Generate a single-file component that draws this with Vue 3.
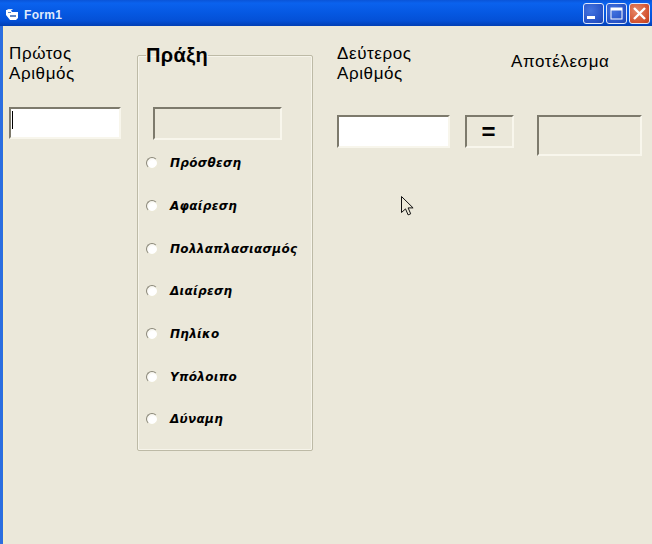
<script setup>
const ops = ['Πρόσθεση', 'Αφαίρεση', 'Πολλαπλασιασμός', 'Διαίρεση', 'Πηλίκο', 'Υπόλοιπο', 'Δύναμη']
</script>

<template>
  <div class="window">
    <header class="titlebar">
      <svg class="appicon" width="16" height="16" viewBox="0 0 16 16">
        <path d="M1 3h5l1 2h6v6l-2 2H5L1 8z" fill="#fff" />
        <path d="M2 2h5l1 1H3z" fill="#cfe0f5" />
        <path d="M5 8h6v2H5z" fill="#5f86c4" />
        <path d="M3 5h3v1H3z" fill="#5f86c4" />
      </svg>
      <span class="title">Form1</span>
      <div class="controls">
        <button class="ctl">
          <svg width="21" height="21" viewBox="0 0 21 21"><rect x="4" y="13" width="8" height="3" fill="#fff" /></svg>
        </button>
        <button class="ctl">
          <svg width="21" height="21" viewBox="0 0 21 21"><rect x="5" y="5" width="11" height="11" fill="none" stroke="#fff" /><rect x="5" y="5" width="11" height="2.5" fill="#fff" /></svg>
        </button>
        <button class="ctl close">
          <svg width="21" height="21" viewBox="0 0 21 21"><path d="M5 5l11 11M16 5L5 16" stroke="#fff" stroke-width="2.4" fill="none" /></svg>
        </button>
      </div>
    </header>

    <main class="client">
      <section class="col-first">
        <label class="cap">Πρώτος<br />Αριθμός</label>
        <div class="box white first-input"><i class="caret"></i></div>
      </section>

      <fieldset class="group">
        <legend>Πράξη</legend>
        <div class="box op-box"></div>
        <ul class="ops">
          <li v-for="op in ops" :key="op" class="op">
            <span class="radio"></span>
            <span class="op-label">{{ op }}</span>
          </li>
        </ul>
      </fieldset>

      <section class="col-second">
        <label class="cap">Δεύτερος<br />Αριθμός</label>
        <div class="box white second-input"></div>
      </section>

      <section class="col-eq">
        <div class="box eq">=</div>
      </section>

      <section class="col-result">
        <label class="cap result-cap">Αποτέλεσμα</label>
        <div class="box result-box"></div>
      </section>

      <svg class="cursor" width="14" height="22" viewBox="0 0 14 22">
        <path d="M1.5 1.5v16l4-3.6 2.6 6 2.6-1.1-2.6-5.9h5z" fill="#ece9d8" stroke="#111" stroke-width="1" />
      </svg>
    </main>
  </div>
</template>

<style scoped>
.window {
  width: 652px;
  height: 544px;
  display: flex;
  flex-direction: column;
  overflow: hidden;
  font-family: "Liberation Sans", Arial, sans-serif;
  background: #ebe8da;
}
.titlebar {
  height: 26px;
  flex: none;
  display: flex;
  align-items: center;
  padding: 0 2px 0 5px;
  box-sizing: border-box;
  background: linear-gradient(180deg, #0a54d8 0%, #0a62ee 12%, #0558e2 50%, #0450d6 80%, #023fb4 100%);
}
.appicon { flex: none; margin-top: 3px; }
.title {
  margin-left: 3px;
  margin-top: 3px;
  color: #dfeafc;
  font: bold 12px "Liberation Sans", Arial, sans-serif;
  letter-spacing: 0.3px;
}
.controls {
  margin-left: auto;
  display: flex;
  gap: 2px;
  margin-top: 0;
}
.ctl {
  width: 21px;
  height: 21px;
  padding: 0;
  border: 1px solid #dfe8fb;
  border-radius: 3px;
  background: radial-gradient(circle at 35% 35%, #4474e0, #2450c4 75%, #2046a8);
  display: flex;
  align-items: center;
  justify-content: center;
  box-sizing: border-box;
}
.ctl svg { margin: -1px; }
.close { background: radial-gradient(circle at 35% 35%, #e88a6a, #d2512e 70%, #b8401e); }

.client {
  position: relative;
  flex: 1;
  display: flex;
  align-items: flex-start;
  background: #ebe8da;
  border-left: 3px solid #2c6ee0;
  box-shadow: inset 2px 0 0 #f3eccb;
  color: #000;
}
.cap {
  display: block;
  font-size: 17px;
  line-height: 20px;
  letter-spacing: 0.6px;
}
.box {
  box-sizing: border-box;
  border: 2px solid;
  border-color: #7d7a6c #f8f6ec #f8f6ec #7d7a6c;
  background: #ebe8da;
}
.white { background: #fff; }

.col-first {
  width: 112px;
  margin-left: 6px;
  padding-top: 18px;
}
.first-input {
  width: 112px;
  height: 32px;
  margin-top: 23px;
  padding: 2px 0 0 1px;
}
.caret {
  display: block;
  width: 1px;
  height: 18px;
  background: #000;
}

.group {
  width: 176px;
  height: 406px;
  margin: 19px 0 0 16px;
  padding: 0;
  box-sizing: border-box;
  border: 1px solid #bdbaa6;
  border-radius: 2px;
  box-shadow: inset 0 0 0 1px #f6f4ea;
  min-width: 0;
}
legend {
  margin-left: 8px;
  padding: 0;
  font-size: 20px;
  line-height: 20px;
  font-weight: bold;
  letter-spacing: 0.4px;
}
.op-box {
  width: 129px;
  height: 33px;
  margin: 42px 0 0 15px;
}
.ops {
  list-style: none;
  margin: 2px 0 0;
  padding: 0 0 0 8px;
}
.op {
  height: 42.7px;
  display: flex;
  align-items: center;
}
.radio {
  width: 12px;
  height: 12px;
  flex: none;
  box-sizing: border-box;
  border-radius: 50%;
  border: 1px solid #ece9d8;
  border-top-color: #8b887a;
  border-left-color: #8b887a;
  background: radial-gradient(circle at 60% 65%, #fff 45%, #ece9d8 100%);
}
.op-label {
  margin-left: 12px;
  font-family: "DejaVu Sans", sans-serif;
  font-size: 12px;
  font-weight: bold;
  font-style: italic;
  letter-spacing: 0.3px;
  color: #000;
}
.col-second {
  width: 113px;
  margin-left: 24px;
  padding-top: 18px;
}
.second-input {
  width: 113px;
  height: 33px;
  margin-top: 31px;
}
.col-eq {
  margin-left: 15px;
  padding-top: 89px;
}
.eq {
  width: 49px;
  height: 33px;
  font-size: 24px;
  font-weight: bold;
  line-height: 29px;
  padding-right: 2px;
  text-align: center;
}
.col-result {
  width: 131px;
  margin-left: -3px;
  padding-top: 26px;
}
.result-box {
  width: 105px;
  height: 41px;
  margin: 43px 0 0 26px;
}
.cursor {
  position: absolute;
  left: 397px;
  top: 169px;
}
</style>
